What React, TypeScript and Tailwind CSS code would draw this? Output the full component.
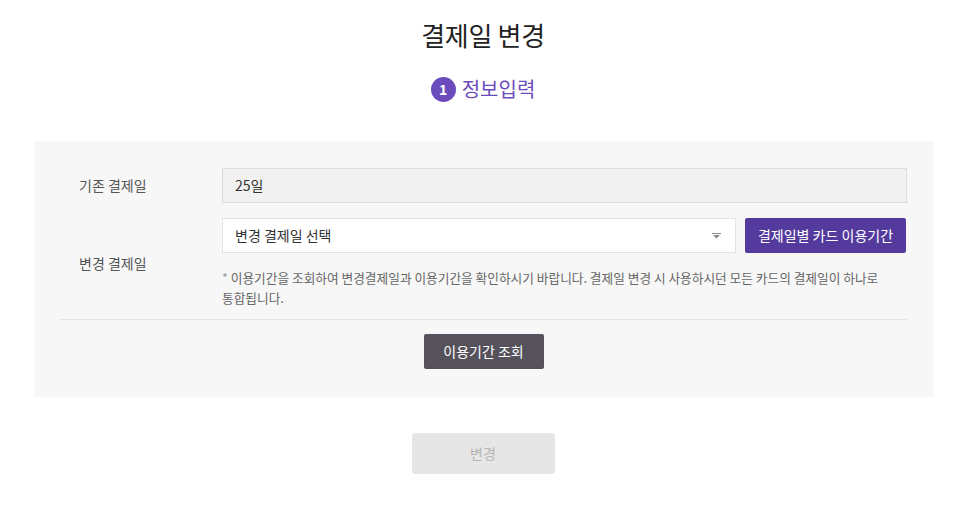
const font = { fontFamily: '"Noto Sans CJK KR", "Noto Sans", sans-serif' };

export default function App() {
  return (
    <div className="min-h-[521px] w-full bg-white text-[#333]" style={font}>
      {/* header */}
      <div className="flex flex-col items-center pt-[16px]">
        <h1 className="text-[26px] leading-[38px] font-normal text-[#222] tracking-[-0.3px]">결제일 변경</h1>
        <div className="mt-[21px] flex items-center gap-[6px]">
          <span className="flex h-[25px] w-[25px] items-center justify-center rounded-full bg-[#6c4cbd] text-[14px] font-bold leading-none text-white">
            1
          </span>
          <span className="text-[20px] leading-[28px] text-[#6c4cbd]">정보입력</span>
        </div>
      </div>

      {/* form panel */}
      <div className="ml-[34px] mt-[38px] w-[900px] bg-[#f7f7f7] pb-[28px] pl-[26px] pr-[27px] pt-[27px]">
        <div className="flex items-center">
          <div className="w-[162px] pl-[19px] text-[14px] text-[#555]">기존 결제일</div>
          <div className="flex h-[35px] flex-1 items-center border border-[#dcdcdc] bg-[#f1f1f1] px-[12px] text-[14px] text-[#333]">
            25일
          </div>
        </div>

        <div className="mt-[15px] flex items-center">
          <div className="w-[162px] pl-[19px] text-[14px] text-[#555]">변경 결제일</div>
          <div className="flex-1">
            <div className="mr-[1px] flex gap-[9px]">
              <div className="flex h-[35px] flex-1 items-center justify-between border border-[#e2e2e2] bg-white pl-[12px] pr-[12px] text-[14px] text-[#333]">
                <span>변경 결제일 선택</span>
                <svg width="9" height="6" viewBox="0 0 9 6" className="mr-[2px]">
                  <path d="M0 0.5h9" stroke="#888" strokeWidth="1" />
                  <path d="M1 2h7L4.5 5.5z" fill="#888" />
                </svg>
              </div>
              <button className="h-[35px] w-[161px] rounded-[2px] bg-[#553a9d] text-[14px] text-white">
                결제일별 카드 이용기간
              </button>
            </div>
            <p className="mt-[15px] text-[12.7px] leading-[20px] text-[#666]">
              <span className="text-[#999]">*</span> 이용기간을 조회하여 변경결제일과 이용기간을 확인하시기 바랍니다. 결제일 변경 시 사용하시던 모든 카드의 결제일이 하나로
              <br />
              통합됩니다.
            </p>
          </div>
        </div>

        <div className="mt-[11px] border-t border-[#e4e4e4]" />

        <div className="mt-[14px] flex justify-center">
          <button className="h-[35px] w-[120px] rounded-[2px] bg-[#55525c] text-[14px] text-white">이용기간 조회</button>
        </div>
      </div>

      <div className="mt-[36px] flex justify-center pb-[47px]">
        <button className="h-[41px] w-[143px] rounded-[3px] bg-[#e6e6e6] text-[14px] text-[#b5b5b5]">변경</button>
      </div>
    </div>
  );
}
